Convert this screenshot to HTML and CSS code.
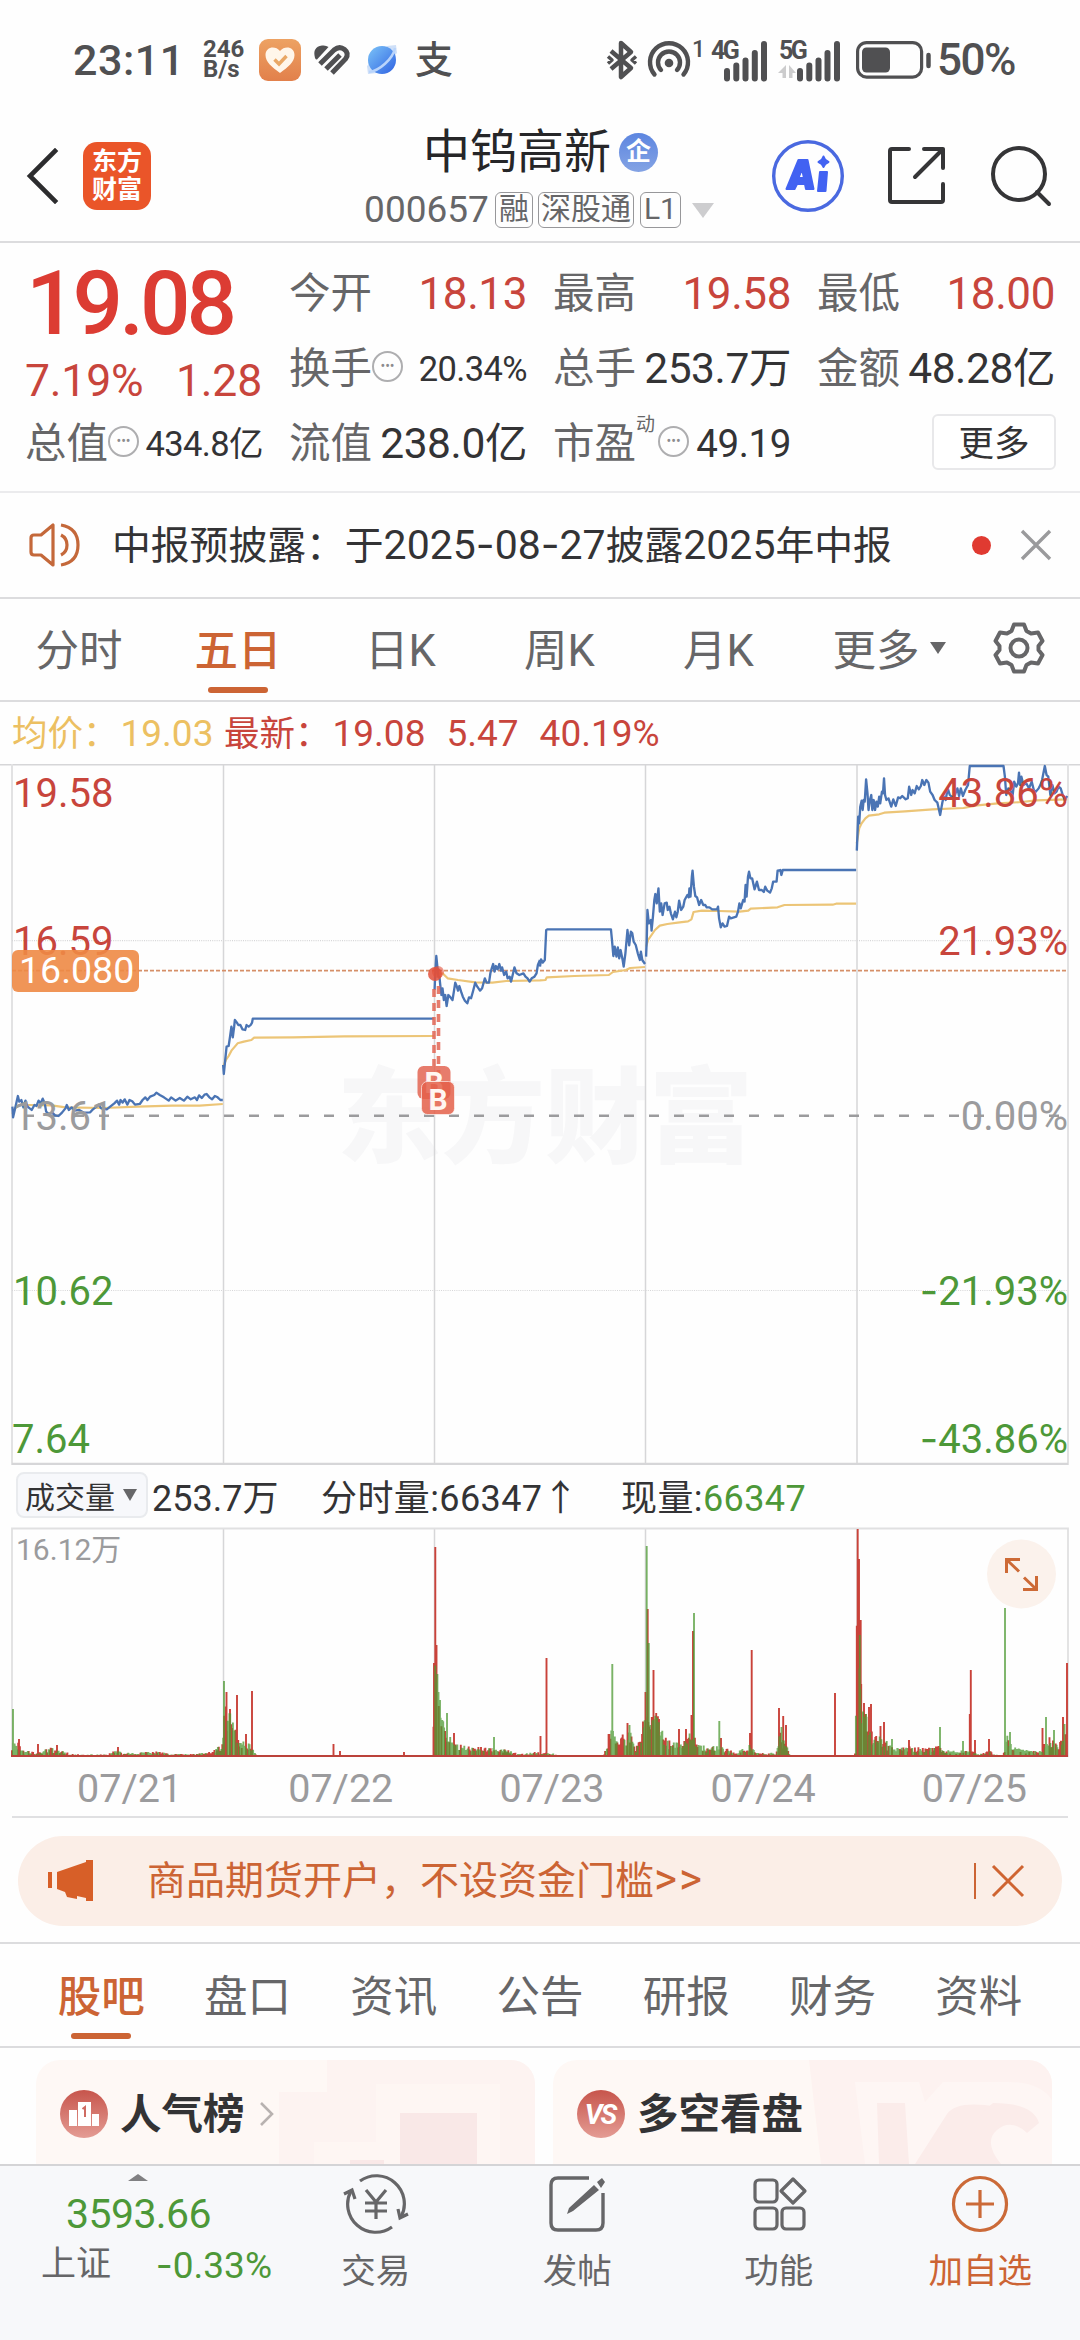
FILE: index.html
```html
<!DOCTYPE html>
<html lang="zh-CN">
<head>
<meta charset="utf-8">
<title>中钨高新 000657</title>
<link rel="stylesheet" href="styles.css">
</head>
<body>
<div class="status">
  <span class="clock">23:11</span>
  <span class="netspeed"><b>246</b><b>B/s</b></span>
  <svg class="st-app" width="42" height="42" viewBox="0 0 42 42"><defs><linearGradient id="og" x2="0" y2="1"><stop offset="0" stop-color="#eda263"/><stop offset="1" stop-color="#e2804b"/></linearGradient></defs><rect width="42" height="42" rx="9" fill="url(#og)"/><path d="M21 34C13 28 6.500 23 6.500 16C6.500 8 16 6 21 12C26 6 35.500 8 35.500 16C35.500 23 29 28 21 34Z" fill="#fff6ea"/><path d="M15.500 20.500l4.500 4.500 7.500-8" fill="none" stroke="#e9a765" stroke-width="3.400"/></svg>
  <svg class="st-heart" width="38" height="32" viewBox="0 0 38 32"><path d="M2 14Q-1 3 9 1.500Q13 1 15.500 3L4 15.500Q3 16 2 14Z" fill="#505052"/><g fill="none" stroke="#505052" stroke-width="5"><path d="M7 20L21 6Q26.500 1.500 31.500 5.500T32.500 15L19 29"/><path d="M13 25L27 11"/></g></svg>
  <svg class="st-planet" width="30" height="30" viewBox="0 0 30 30"><defs><linearGradient id="pg" x1="0" y1="0" x2="1" y2="1"><stop offset="0" stop-color="#7cc4f8"/><stop offset="1" stop-color="#2f62e2"/></linearGradient></defs><path d="M20 1l9-1 1 8-20 20-9 1-1-8z" fill="#cfe0f8"/><circle cx="15" cy="15" r="14" fill="url(#pg)"/><path d="M2 27C12 26 26 14 28 3" fill="none" stroke="#b9d4fb" stroke-width="2.500"/></svg>
  <span class="st-pay">支</span>
  <svg class="st-bt" width="30" height="40" viewBox="0 0 30 40"><g fill="none" stroke="#505052" stroke-width="4.500" stroke-linejoin="round"><path d="M4 11L24 28L14 37V3L24 12L4 29"/><path d="M1 16.500l4 3.500-4 3.500M29 16.500l-4 3.500 4 3.500" stroke-width="3.500"/></g></svg>
  <svg class="st-spot" width="54" height="40" viewBox="0 0 54 40"><g fill="none" stroke="#505052" stroke-width="4.400" stroke-linecap="round"><path d="M7.500 34.500A19 19 0 1 1 36.500 34.500"/><path d="M14 30A11 11 0 1 1 30 30"/></g><circle cx="22" cy="23" r="4.300" fill="#505052"/><text x="45" y="17" class="st-mini">1</text></svg>
  <svg class="st-sig" width="58" height="40" viewBox="0 0 58 40"><text x="0" y="19" class="st-net">4G</text><path d="M16 38.500V31M25.300 38.500V25.500M34.500 38.500V20.500M43.800 38.500V13M53 38.500V4" class="st-bars"/></svg>
  <svg class="st-sig2" width="62" height="40" viewBox="0 0 62 40"><text x="0" y="19" class="st-net">5G</text><path d="M21 38.500V31M30.300 38.500V25.500M39.500 38.500V20.500M48.500 38.500V13M58 38.500V4" class="st-bars"/><path d="M7 25v13H3.500v-5H-1zM10 38V25l7 8h-3.500v5z" fill="#cccccd"/></svg>
  <svg class="st-bat" width="76" height="38" viewBox="0 0 76 38"><rect x="1.600" y="1.600" width="64" height="34.500" rx="9" fill="none" stroke="#505052" stroke-width="3.200"/><rect x="6" y="6.500" width="28" height="25" rx="4.500" fill="#505052"/><path d="M72.500 14v11" stroke="#505052" stroke-width="4.500" stroke-linecap="round"/></svg>
  <span class="percent">50%</span>
</div>

<header class="header">
  <div class="head-left">
    <svg width="34" height="56" viewBox="0 0 34 56"><path d="M30 3L5 28L30 53" fill="none" stroke="#2c2c2e" stroke-width="4.600" stroke-linecap="square"/></svg>
    <div class="brand"><span>东方</span><span>财富</span></div>
  </div>
  <div class="head-mid">
    <div class="name">中钨高新<i class="qi">企</i></div>
    <div class="code">000657<span class="tag t1">融</span><span class="tag t2">深股通</span><span class="tag t3">L1</span><i class="tri"></i></div>
  </div>
  <div class="head-right">
    <svg width="74" height="74" viewBox="0 0 74 74"><circle cx="37" cy="37" r="34.300" fill="none" stroke="#4a69e0" stroke-width="3.400"/><g fill="#4262f2" stroke="#4262f2" stroke-width="2" stroke-linejoin="round"><path fill-rule="evenodd" d="M27.500 21h9l6 29h-7.500l-1-5h-8l-2.500 5H15.500zM31 30l-3.500 9h5.500z"/><path d="M49 33h7l-1.500 19h-7.500zM52.500 17.500q1 4 5 5.500-4 1.500-5 5-1-3.500-5-5 4-1.500 5-5.500z"/></g></svg>
    <svg width="60" height="60" viewBox="0 0 60 60"><g fill="none" stroke="#353537" stroke-width="4" stroke-linecap="round" stroke-linejoin="round"><path d="M22 3H5Q3 3 3 5V54Q3 56 5 56H54Q56 56 56 54V38"/><path d="M37 3H56V22M56 3L28 31"/></g></svg>
    <svg width="62" height="62" viewBox="0 0 62 62"><g fill="none" stroke="#353537" stroke-width="4" stroke-linecap="round"><circle cx="29" cy="29" r="26"/><path d="M47 47L59 59"/></g></svg>
  </div>
</header>

<section class="quote">
  <div class="last"><strong>19.08</strong><p class="num"><span>7.19%</span><span>1.28</span></p></div>
  <div class="cell"><label>今开</label><em class="red">18.13</em></div>
  <div class="cell"><label>最高</label><em class="red">19.58</em></div>
  <div class="cell"><label>最低</label><em class="red">18.00</em></div>
  <div class="cell"><label>换手</label><i class="dots">•••</i><em class="mini">20.34%</em></div>
  <div class="cell"><label>总手</label><em class="wide">253.7万</em></div>
  <div class="cell"><label>金额</label><em class="wide">48.28亿</em></div>
  <div class="cell"><label>总值</label><i class="dots">•••</i><em class="mini">434.8亿</em></div>
  <div class="cell"><label>流值</label><em class="wide">238.0亿</em></div>
  <div class="cell"><label>市盈</label><sup>动</sup><i class="dots">•••</i><em class="mid">49.19</em></div>
  <div class="cell"><button class="more">更多</button></div>
</section>

<section class="notice">
  <svg width="54" height="46" viewBox="0 0 54 46"><g fill="none" stroke="#c4683a" stroke-width="3.200" stroke-linejoin="round"><path d="M24 3V43L12 33H5Q2 33 2 30V16Q2 13 5 13H12Z"/><path d="M32 13Q38 16 38 23T32 33"/><path d="M32 3Q49 6 49 23T32 43"/></g></svg>
  <p>中报预披露：于<b>2025<u>-</u>08<u>-</u>27</b>披露<b>2025</b>年中报</p>
  <i class="reddot"></i>
  <svg width="32" height="32" viewBox="0 0 32 32"><path d="M2 2L30 30M30 2L2 30" stroke="#9a9a9c" stroke-width="3.400"/></svg>
</section>

<nav class="periods">
  <span>分时</span><span class="on">五日</span><span>日K</span><span>周K</span><span>月K</span><span>更多<i></i></span>
  <span><svg width="54" height="54" viewBox="-27 -27 54 54"><g fill="none" stroke="#666668" stroke-width="4" stroke-linejoin="round"><path d="M-5-23.500H5L7.500-17L12-14.500L19-15.500L23.500-7L19.500-2V2L23.500 7L19 15.500L12 14.500L7.500 17L5 23.500H-5L-7.500 17L-12 14.500L-19 15.500L-23.500 7L-19.500 2V-2L-23.500-7L-19-15.500L-12-14.500L-7.500-17Z"/><circle r="8.500"/></g></svg></span>
</nav>

<div class="legend"><span class="yel">均价：<b>19.03</b></span><span class="red">最新：<b>19.08</b><b>5.47</b><b>40.19%</b></span></div>

<svg class="price" width="1080" height="701" viewBox="0 764 1080 701">
  <text x="545" y="1155" class="mark">东方财富</text>
  <g stroke="#d6d6d8" fill="none" stroke-width="1.500">
    <path d="M223.500 765V1465M434.500 765V1465M645.500 765V1465M857 765V1465"/>
    <path d="M0 764.800H1080" stroke-width="1.600"/>
    <path d="M12 764V1465M1068 764V1465" stroke="#e2e2e3" stroke-width="2"/>
    <path d="M12 1464H1068" stroke-width="2.500"/>
    <path d="M12 940.700H1068M12 1290.500H1068" stroke-dasharray="1 1.200" stroke-width="1.200"/>
  </g>
  <path d="M12 1115.800H1068" stroke="#9b9b9d" stroke-width="2.400" stroke-dasharray="10 15" stroke-dashoffset="-12"/>
  <path d="M12 970.700H1066" stroke="#d58f68" stroke-width="1.700" stroke-dasharray="4 2"/>
  <g fill="none" stroke="#ecc577" stroke-width="6.500" stroke-linejoin="round" transform="translate(0 760) scale(.34436 .33333)">
    <polyline points="36,1062 44,1045 56,1035 80,1035 150,1036 190,1042 300,1044 400,1040 500,1037 580,1037 647,1032"/>
    <polyline points="648,920 656,900 664,888 672,872 682,860 690,850 708,845 730,840 738,833 850,832 1000,829 1260,828"/>
    <polyline points="1265,640 1285,640 1300,655 1330,660 1380,667 1430,668 1470,663 1568,661 1584,660 1588,652 1668,648 1768,645 1780,636 1818,630 1830,624 1873,621"/>
    <polyline points="1876,560 1882,540 1890,528 1902,510 1916,497 1938,492 1968,488 1998,484 2008,478 2014,456 2038,452 2088,453 2148,455 2173,452 2180,446 2258,442 2278,435 2418,434 2428,431 2486,431"/>
    <polyline points="2488,250 2495,205 2502,190 2513,175 2523,167 2553,163 2568,158 2628,154 2708,148 2798,144 2838,136 2898,130 2968,126 3008,121 3099,118"/>
  </g>
  <g fill="none" stroke="#4a74b4" stroke-width="6.800" stroke-linejoin="round">
    <g transform="translate(0 760) scale(.34436 .33333)">
      <polyline points="36,1040 38,1072 44,1045 52,1008 56,1025 62,1020 68,1042 74,1022 80,1040 92,1050 100,1035 106,1038 112,1022 118,1030 124,1016 130,1030 134,1055 142,1062 152,1058 160,1066 170,1068 180,1058 190,1045 194,1035 200,1050 208,1042 216,1052 230,1050 244,1058 262,1057 270,1048 280,1040 286,1034 294,1045 310,1048 320,1040 332,1030 340,1022 346,1034 350,1020 356,1028 362,1018 370,1034 376,1020 384,1024 392,1034 406,1032 414,1020 422,1012 428,1020 436,1010 448,1005 454,998 464,1005 476,1012 490,1022 497,1012 510,1022 522,1014 534,1022 544,1010 554,1018 566,1012 572,1020 578,1006 586,1014 594,1004 600,1002 608,1012 616,1018 624,1008 632,1012 640,1020 647,1020"/>
      <polyline points="648,915 650,942 654,900 658,860 664,858 668,830 672,800 676,832 680,800 682,780 688,788 692,795 698,795 704,808 712,810 716,795 722,800 728,795 732,788 734,776 1260,776"/>
      <polyline points="1262,690 1264,640 1267,588 1270,620 1273,650 1276,650 1279,680 1282,705 1285,685 1289,720 1293,705 1297,738 1302,705 1308,712 1314,720 1318,695 1322,668 1326,678 1330,692 1334,678 1339,695 1344,710 1350,722 1357,730 1362,712 1368,715 1374,692 1380,668 1386,680 1394,692 1400,685 1404,670 1408,655 1413,668 1420,668 1424,640 1428,625 1432,612 1436,635 1440,618 1445,628 1450,612 1455,632 1458,622 1464,645 1470,635 1474,655 1480,650 1484,665 1490,640 1494,622 1500,640 1508,645 1520,640 1526,650 1532,655 1538,665 1544,655 1552,650 1558,640 1562,615 1568,600"/>
    </g>
    <g transform="translate(540 760) scale(.34436 .33333)">
      <polyline points="0,620 3,598 8,608 14,600 18,510 22,508 206,508 209,540 213,588 217,560 222,590 226,562 230,595 234,570 240,600 243,620 248,580 254,510 259,556 264,515 268,520 272,545 278,555 284,580 290,600 293,575 297,600 305,612"/>
      <polyline points="308,590 310,540 312,450 316,490 322,480 324,512 328,470 332,420 335,402 339,430 344,385 348,455 352,430 356,465 362,430 368,428 371,450 376,440 380,460 386,478 392,455 396,472 400,455 404,422 410,450 416,440 420,420 428,405 432,412 434,385 437,410 441,350 443,332 447,380 451,408 456,412 462,435 468,420 474,435 480,435 484,442 492,442 500,448 514,448 517,440 520,475 525,502 530,490 536,500 543,498 549,470 554,475 570,470 575,455 579,430 583,445 590,420 594,425 597,375 600,410 604,350 607,335 611,355 616,355 623,388 630,365 636,390 644,390 650,396 654,380 660,392 668,398 673,385 677,365 687,365 690,332 698,330 701,345 705,330 918,330"/>
      <polyline points="920,272 922,220 924,170 927,190 930,140 934,122 937,150 940,120 943,125 947,58 951,100 954,150 958,120 962,105 965,150 969,120 973,150 977,125 981,140 985,110 988,130 993,95 996,100 999,55 1002,105 1006,120 1012,115 1020,140 1026,118 1033,138 1040,112 1046,115 1052,108 1062,118 1068,115 1072,80 1078,105 1082,90 1088,100 1094,78 1100,88 1106,78 1110,60 1116,75 1122,60 1128,68 1133,95 1140,105 1146,120 1154,128 1162,165 1168,130 1172,110 1178,120 1184,85 1190,105 1198,112 1205,105 1212,85 1217,108 1222,85 1228,108 1235,90 1243,75 1248,18 1346,18 1350,50 1354,105 1360,85 1366,90 1372,110 1377,65 1383,80 1388,70 1391,38 1394,75 1398,50 1404,75 1412,70 1420,85 1428,65 1434,90 1440,95 1448,85 1453,75 1458,60 1466,18 1471,45 1476,50 1482,105 1488,75 1494,100 1500,95 1506,80 1512,85 1518,105 1524,120 1531,108"/>
    </g>
  </g>
  <g class="axis">
    <text x="13" y="807" class="up">19.58</text><text x="13" y="955" class="up">16.59</text><text x="13" y="1130" class="flat">13.61</text><text x="13" y="1305" class="down">10.62</text><text x="12" y="1453" class="down">7.64</text>
    <g text-anchor="end"><text x="1068" y="807" class="up">43.86%</text><text x="1068" y="955" class="up">21.93%</text><text x="1068" y="1130" class="flat">0.00%</text><text x="1068" y="1305" class="down"><tspan class="dash">-</tspan>21.93%</text><text x="1068" y="1453" class="down"><tspan class="dash">-</tspan>43.86%</text></g>
  </g>
  <rect x="12" y="950" width="127" height="42" rx="6" fill="#ee8945" fill-opacity=".9"/>
  <text x="19" y="983" class="cost">16.080</text>
  <g fill="none" stroke="#e26553" stroke-opacity=".85" stroke-width="3.600" stroke-dasharray="8 6"><path d="M434 989V1066M438.500 986V1078"/></g>
  <circle cx="435" cy="974" r="7" fill="#e3503b" fill-opacity=".85"/><circle cx="438" cy="972" r="6" fill="#e3503b" fill-opacity=".6"/>
  <rect x="417.500" y="1066" width="33" height="33" rx="6" fill="#e36552" fill-opacity=".85"/><text x="434" y="1093" class="buy">B</text>
  <rect x="421.500" y="1081.500" width="33" height="33" rx="6" fill="#e4604a" fill-opacity=".85" stroke="#fff" stroke-opacity=".6"/><text x="438" y="1110" class="buy">B</text>
</svg>

<div class="volbar"><span class="pick">成交量<i></i></span><span class="v1">253.7万</span><span class="v2">分时量:66347↑</span><span class="v3">现量:<b>66347</b></span></div>

<svg class="volume" width="1080" height="232" viewBox="0 1527 1080 232">
  <path d="M223.500 1528V1757M434.500 1528V1757M645.500 1528V1757M857 1528V1757" stroke="#d6d6d8" stroke-width="1.500"/>
  <path d="M12 1757V1528.500H1068V1757" fill="none" stroke="#e0e0e1" stroke-width="1.800"/>
  <text x="16" y="1560" class="vmax">16.12万</text>
  <g id="bars"></g>
  <path d="M11 1756H1068" stroke="#bb423a" stroke-width="1.800"/>
  <circle cx="1021.500" cy="1574" r="34.500" fill="#fbf2ec"/>
  <path d="M1006.500 1573V1559.500H1020M1007 1560L1019 1571.500M1024 1577.500L1036 1589M1036.500 1576V1589.500H1023" fill="none" stroke="#cd6a36" stroke-width="3"/>
</svg>

<div class="dates"><span>07/21</span><span>07/22</span><span>07/23</span><span>07/24</span><span>07/25</span></div>

<div class="ad">
  <svg width="48" height="42" viewBox="0 0 48 42"><g fill="#d75f28"><path d="M0 12h4v16H0zM9 12L38 2V0h7v41h-7v-3l-9-2v3l-10-2-2-5-8-3z"/></g></svg>
  <p>商品期货开户，不设资金门槛<b>&gt;&gt;</b></p>
  <i class="bar"></i>
  <svg width="34" height="34" viewBox="0 0 34 34"><path d="M2 2L32 32M32 2L2 32" stroke="#cf6431" stroke-width="3"/></svg>
</div>

<nav class="sections"><span class="on">股吧</span><span>盘口</span><span>资讯</span><span>公告</span><span>研报</span><span>财务</span><span>资料</span></nav>

<section class="cards">
  <div class="card">
    <svg class="deco" width="499" height="104" viewBox="0 0 499 104"><path d="M291 0H499V104H243V32H291z" fill="#fdf3f1"/><path d="M278 82h62V24h124V104H278z" fill="#fef6f3"/><path d="M364 53h77v51h-77zM314 100h34v4h-34z" fill="#f9e8e7"/></svg>
    <svg width="48" height="48" viewBox="0 0 48 48"><defs><linearGradient id="rg" x2="0" y2="1"><stop offset="0" stop-color="#c7554c"/><stop offset="1" stop-color="#e49c94"/></linearGradient></defs><circle cx="24" cy="24" r="24" fill="url(#rg)"/><path d="M9 20h8v16H9zM18 12h13v24H18zM32 24h7v12h-7z" fill="#fff"/><path d="M22.500 19l2.500-2v10" fill="none" stroke="#cf6b62" stroke-width="2"/></svg>
    <h3>人气榜</h3>
    <svg width="16" height="26" viewBox="0 0 16 26"><path d="M2 2L13 13L2 24" fill="none" stroke="#b8b2b0" stroke-width="2.600"/></svg>
  </div>
  <div class="card">
    <svg class="deco" width="499" height="104" viewBox="0 0 499 104"><path d="M256 0H499V104H268z" fill="#fdf2f0"/><path d="M302 22h64l6 20 18-20h65q32 0 44 18v64H312z" fill="#fef6f4"/><path d="M324 43h28l4 61h-30zM362 104l32-50q8-12 38-9l20 3q-24 12-22 30l14 26z" fill="#fbecea"/><path d="M440 43q40 0 46 20l-12 10q-16-15-30-3t4 34h-22q-14-40 14-61z" fill="#fbecea"/></svg>
    <svg width="48" height="48" viewBox="0 0 48 48"><circle cx="24" cy="24" r="24" fill="url(#rg)"/><text x="23" y="34" class="vs">VS</text></svg>
    <h3>多空看盘</h3>
  </div>
</section>

<footer class="bottom">
  <div class="index"><i></i><b>3593.66</b><p><span>上证</span><em><u>-</u>0.33%</em></p></div>
  <div class="act"><svg width="68" height="60" viewBox="-34 -30 68 60"><g fill="none" stroke="#666668" stroke-width="3.200"><path d="M-16-23A28 28 0 0 1 25 13M16 23A28 28 0 0 1-25-13"/><path d="M-32-10L-24-14L-21-5M32 10L24 14L22 5"/><path d="M-10-14L0-2L10-14M0-2V15M-11-1H11M-11 7H11"/></g></svg><span>交易</span></div>
  <div class="act"><svg width="60" height="60" viewBox="-30 -30 60 60"><path d="M12-26H-19Q-26-26-26-19V19Q-26 26-19 26H19Q26 26 26 19V-11" fill="none" stroke="#666668" stroke-width="3.400"/><path d="M20-22l5-4 3 4-4 6zM17-19l5 5L-4 7l-6 3 2-6z" fill="#666668"/></svg><span>发帖</span></div>
  <div class="act"><svg width="60" height="60" viewBox="-30 -30 60 60"><g fill="none" stroke="#666668" stroke-width="3.200" stroke-linejoin="round"><rect x="-24" y="-24" width="22" height="22" rx="4"/><rect x="-24" y="4" width="22" height="21" rx="4"/><rect x="3" y="4" width="22" height="21" rx="4"/><path d="M14-25L26-13L14-1L2-13Z"/></g></svg><span>功能</span></div>
  <div class="act hot"><svg width="60" height="60" viewBox="-30 -30 60 60"><g fill="none" stroke="#cb6a38" stroke-width="3.200"><circle r="26.500"/><path d="M-14 0H14M0-14V14"/></g></svg><span>加自选</span></div>
</footer>
<script src="chart.js"></script>
</body>
</html>
```
FILE: styles.css
```css
* { box-sizing: border-box; margin: 0; padding: 0; }
body { width: 1080px; height: 2340px; overflow: hidden; background: #fefefe; color: #333335; font-family: Roboto, "Noto Sans CJK SC", sans-serif; display: flex; flex-direction: column; }
svg { display: block; flex: none; }
i, em { font-style: normal; }
u, .dash { text-decoration: none; font-family: Inter, Roboto, sans-serif; }
.red { color: #c8453c; }
.status, .header, .quote, .notice, .periods, .legend, .volbar, .dates, .sections, .cards, .bottom { flex: none; width: 1080px; white-space: nowrap; }

.status { height: 110px; padding: 10px 0 0 73px; display: flex; align-items: center; color: #505052; }
.status svg { overflow: visible; }
.clock { width: 130px; font-size: 43px; font-weight: 500; letter-spacing: 0.5px; line-height: 50px; }
.netspeed { width: 56px; display: flex; flex-direction: column; font-size: 24px; line-height: 20px; padding-bottom: 2px; }
.st-heart { margin-left: 12px; }
.st-planet { margin-left: 16px; }
.st-pay { margin-left: 18px; width: 40px; font-size: 38px; line-height: 40px; font-weight: 500; }
.st-bt { margin-left: 152px; }
.st-spot { margin-left: 10px; }
.st-sig { margin-left: 10px; }
.st-sig2 { margin-left: 10px; }
.st-bat { margin-left: 15px; }
.st-mini { font-size: 23px; font-weight: 500; fill: #505052; }
.st-net { font-size: 25px; font-weight: 700; fill: #505052; letter-spacing: -2.5px; }
.st-bars { stroke: #505052; stroke-width: 6; stroke-linecap: round; fill: none; }
.percent { margin-left: 5px; font-size: 44px; font-weight: 500; letter-spacing: -1.5px; line-height: 50px; }

.header { height: 133px; display: flex; border-bottom: 2px solid #dcdcde; }
.head-left { width: 364px; padding-left: 25px; display: flex; align-items: center; gap: 24px; }
.brand { width: 68px; height: 68px; border-radius: 14px; background: #ea5529; color: #fff; font-size: 25px; font-weight: 700; line-height: 28px; display: flex; flex-direction: column; align-items: center; justify-content: center; }
.head-mid { width: 350px; display: flex; flex-direction: column; align-items: center; }
.name { display: flex; align-items: center; font-size: 47px; line-height: 62px; height: 70px; color: #262628; gap: 8px; margin-top: 7px; padding-left: 3px; }
.qi { width: 39px; height: 39px; border-radius: 50%; background: linear-gradient(#5d86e0, #84a3e4); color: #fff; font-size: 25px; font-weight: 700; line-height: 38px; text-align: center; }
.code { display: flex; align-items: center; font-size: 37px; line-height: 38px; color: #666668; margin-top: 4px; }
.tag { height: 36px; border: 1.5px solid #97979a; border-radius: 6px; font-size: 30px; line-height: 32px; text-align: center; margin-left: 6px; }
.t1 { width: 38px; }
.t2 { width: 96px; margin-left: 5px; }
.t3 { width: 41px; }
.tri { border: 11px solid transparent; border-top: 15px solid #cdcdcf; border-bottom: 0; margin-left: 11px; }
.head-right { display: flex; align-items: center; margin-left: 57px; }
.head-right svg:nth-child(2) { margin-left: 42px; }
.head-right svg:nth-child(3) { margin-left: 43px; }

.quote { height: 250px; border-bottom: 2px solid #ebebed; padding: 13px 25px 0; display: grid; grid-template-columns: repeat(4, 237px); column-gap: 27px; grid-template-rows: repeat(3, 75px); }
.last { grid-row: span 2; color: #dc3c33; }
.last strong { display: block; font-size: 89px; font-weight: 500; line-height: 96px; letter-spacing: -4px; padding: 0 0 2px 1px; }
.last p { display: flex; justify-content: space-between; font-size: 44.500px; line-height: 50px; color: #c8453c; }
.last span { letter-spacing: -0.2px; }
.last .num { margin-top: 2px; }
.cell { display: flex; align-items: center; font-size: 44px; }
.cell label { font-size: 41.500px; color: #666668; line-height: 60px; }
.cell em { line-height: 60px; letter-spacing: -0.4px; margin-left: auto; margin-right: -1px; }
.cell .wide { font-size: 42.500px; }
.cell .mini { font-size: 34.500px; letter-spacing: -0.6px; }
.cell .mid { font-size: 38.500px; }
.dots { width: 31px; height: 31px; border: 2px solid #aeaeb0; border-radius: 50%; font-size: 14px; line-height: 27px; text-align: center; color: #8c8c8e; margin-top: -4px; }
.cell sup { font-size: 19px; line-height: 24px; align-self: flex-start; color: #666668; margin-top: 7px; }
.cell sup + .dots { margin-left: 3px; }
.more { margin: -4px -2px 0 auto; width: 124px; height: 56px; border: 2px solid #e8e8ea; border-radius: 6px; background: #fff; font: 35.500px/50px "Noto Sans CJK SC", sans-serif; color: #333335; padding-bottom: 4px; }

.notice { height: 106px; border-bottom: 2px solid #dcdcde; display: flex; align-items: center; padding-left: 29px; }
.notice p { width: 858px; padding-left: 29px; font-size: 38.800px; line-height: 60px; }
.notice b { font-size: 41px; font-weight: 400; }
.reddot { width: 19px; height: 19px; border-radius: 50%; background: #e03a31; margin: 0 29px 0 31px; }

.periods { height: 103px; border-bottom: 2px solid #dcdcde; display: grid; grid-template-columns: 158px 160px 165px 153px 165px 176px 84px; }
.periods span, .sections span { display: flex; align-items: center; justify-content: center; font-size: 43.500px; color: #666668; position: relative; }
.periods span { padding-bottom: 4px; }
.periods i { border: 8px solid transparent; border-top: 12px solid #666668; border-bottom: 0; margin-left: 10px; }
.periods .on, .sections .on { color: #cc6434; font-weight: 500; }
.periods .on::after, .sections .on::after { content: ""; position: absolute; bottom: 7px; width: 60px; height: 6px; border-radius: 3px; background: #cc6434; }

.legend { height: 62px; display: flex; align-items: center; padding: 0 0 5px 12px; font-size: 35.500px; }
.legend b { font-weight: 400; font-size: 37px; margin-left: 2px; }
.yel { color: #ecc062; width: 212px; }
.legend b + b { margin-left: 21px; }

.price .mark { font: 900 104px "Noto Sans CJK SC", sans-serif; fill: #f7f7f8; text-anchor: middle; }
.axis { font-size: 40px; }
.up { fill: #c8453c; }
.down { fill: #4d9838; }
.flat { fill: #9b9b9d; }
.cost { font-size: 37.500px; fill: #fff; }
.buy { font-size: 30px; font-weight: 700; fill: #fff6f2; text-anchor: middle; }

.volbar { height: 62px; display: flex; align-items: center; padding: 0 0 3px 16px; font-size: 36px; }
.pick { width: 132px; height: 46px; border: 2px solid #e9ebee; border-radius: 8px; background: #f7f8fb; font-size: 30px; padding-left: 7px; display: flex; align-items: center; gap: 8px; }
.pick i { border: 7px solid transparent; border-top: 12px solid #666668; border-bottom: 0; }
.v1 { margin-left: 4px; width: 169px; }
.v2 { width: 300px; letter-spacing: 0.4px; }
.v3 { letter-spacing: 0.4px; }
.v3 b { font-weight: 400; color: #4d9838; }
.vmax { font-size: 30px; fill: #9b9b9d; }

.dates { width: 1056px; height: 59px; margin: 0 12px; padding-left: 12px; display: grid; grid-template-columns: repeat(5, 211.200px); border-bottom: 2px solid #e0e0e2; color: #9b9b9d; font-size: 39.500px; text-align: center; line-height: 60px; flex: none; }

.ad { flex: none; width: 1044px; height: 90px; margin: 18px 18px 16px; border-radius: 45px; background: #fbeee7; display: flex; align-items: center; padding-left: 30px; color: #cc6434; }
.ad p { width: 826px; padding-left: 51px; font-size: 39px; line-height: 60px; white-space: nowrap; }
.ad b { font-weight: 400; font-size: 44px; letter-spacing: 2px; line-height: 40px; }
.ad .bar { width: 1.500px; height: 36px; background: #cc6434; margin: 0 15px 0 52px; }

.sections { height: 106px; border-top: 2px solid #dcdcde; border-bottom: 2px solid #dcdcde; padding: 0 28px; display: grid; grid-template-columns: repeat(7, 1fr); }
.sections span { padding-bottom: 4px; }
.sections .on::after { bottom: 7px; }

.cards { height: 116px; padding: 12px 36px 0; display: grid; grid-template-columns: 499px 499px; gap: 18px; overflow: hidden; }
.card { height: 130px; border-radius: 24px 24px 0 0; background: #fef8f5; padding: 30px 0 0 24px; display: flex; align-items: flex-start; position: relative; overflow: hidden; }
.deco { position: absolute; left: 0; top: 0; }
.card > svg + svg { position: relative; }
.card h3 { margin: 1px 14px 0 12px; font-size: 41.500px; line-height: 48px; font-weight: 700; position: relative; }
.card h3 + svg { margin-top: 11px; position: relative; }
.vs { font-size: 28px; font-weight: 700; font-style: italic; fill: #fff; text-anchor: middle; letter-spacing: -2px; }

.bottom { height: 176px; background: #f7f8fa; border-top: 2px solid #d4d4d6; display: grid; grid-template-columns: 275px repeat(4, 201.500px); }
.index { display: flex; flex-direction: column; align-items: center; padding-top: 8px; color: #4d9838; }
.index i { border: 10px solid transparent; border-bottom: 7px solid #808082; border-top: 0; }
.index b { font-size: 41px; font-weight: 400; line-height: 50px; margin-top: 8px; letter-spacing: -0.6px; padding-left: 2px; }
.index p { width: 275px; padding: 0 3px 0 41px; display: flex; justify-content: space-between; font-size: 37px; line-height: 48px; margin-top: 2px; }
.index p span { font-size: 35px; color: #666668; }
.act { display: flex; flex-direction: column; align-items: center; padding-top: 8px; color: #666668; font-size: 34.500px; line-height: 50px; }
.act span { margin-top: 12px; }
.act.hot { color: #cc6434; }
```
FILE: chart.js
```js
// Volume bars: an envelope of ordinary minutes plus the individual peaks.
const BASE = 1757;
const RED = '#c9423a';
const GREEN = '#4d9a33';

// [x, height]
const envelope = [
  [12, 15], [20, 14], [24, 7], [40, 5], [50, 9], [62, 7], [70, 3], [108, 2.5], [114, 7], [124, 4], [150, 5], [158, 6], [170, 3], [195, 3], [210, 5], [222, 12],
  [224, 55], [231, 42], [238, 22], [246, 12], [250, 14], [254, 6], [258, 1.5], [433, 1.5],
  [435, 110], [438, 60], [442, 44], [447, 30], [453, 12], [470, 12], [485, 9], [505, 8], [518, 3], [538, 5], [550, 4], [558, 2], [604, 2],
  [610, 28], [620, 20], [630, 26], [636, 10], [641, 20], [645, 50], [649, 62], [653, 48], [658, 40], [664, 20], [674, 14], [683, 14], [690, 25], [694, 20], [706, 10], [715, 12], [726, 9], [735, 4], [750, 12], [756, 4], [776, 4], [780, 24], [788, 8], [791, 1.5], [855, 1.5],
  [857, 150], [862, 60], [868, 40], [874, 24], [886, 16], [893, 10], [905, 10], [925, 10], [938, 12], [950, 6], [970, 8], [978, 3], [990, 6], [997, 2], [1003, 2], [1007, 22], [1015, 10], [1030, 6], [1042, 6], [1046, 20], [1052, 18], [1058, 10], [1067, 30]
];

// [x, height, colour]
const peaks = [
  [13, 48, 'g'], [19, 18, 'r'], [38, 13, 'r'], [57, 12, 'r'], [118, 10, 'r'],
  [224, 76, 'g'], [226.500, 65, 'r'], [230, 48, 'r'], [237, 62, 'r'], [246, 23, 'r'], [252, 66, 'r'], [333.500, 13, 'r'], [340, 6, 'r'], [404, 5, 'r'],
  [434, 94, 'r'], [435.300, 210, 'r'], [436.500, 112, 'r'], [437.400, 83, 'g'], [438.500, 65, 'g'], [440, 57, 'g'], [447, 44, 'g'], [454, 24, 'r'], [494, 20, 'g'],
  [540.500, 21, 'r'], [546.500, 99, 'r'], [612.300, 93, 'g'], [627.500, 34, 'r'], [629.500, 32, 'g'],
  [645.500, 65, 'r'], [646.700, 211, 'g'], [647.700, 148, 'r'], [648.800, 114, 'g'], [653.500, 87, 'r'], [659, 38, 'r'], [679, 28, 'r'], [686, 28, 'r'], [691.500, 42, 'r'], [693, 126, 'r'], [694, 144, 'g'],
  [719.300, 36, 'g'], [721, 19, 'r'], [750, 24, 'r'], [751.700, 107, 'r'], [779, 49, 'r'], [781.500, 30, 'g'], [783.200, 41, 'r'], [786, 32, 'r'], [835, 64, 'r'],
  [857, 84, 'r'], [857.700, 228, 'r'], [859, 198, 'r'], [859.800, 122, 'g'], [860.700, 137, 'r'], [864, 54, 'r'], [866, 43, 'g'], [869, 50, 'r'], [871, 53, 'r'], [880.500, 31, 'r'], [884, 35, 'r'], [892, 18, 'g'], [909, 17, 'r'],
  [940, 30, 'g'], [963, 16, 'g'], [969.800, 43, 'r'], [970.800, 87, 'r'], [975, 17, 'r'], [989, 18, 'r'], [1005, 149, 'g'], [1010, 25, 'g'], [1042.500, 29, 'r'], [1046, 40, 'g'], [1054, 27, 'g'], [1063, 40, 'r'], [1064.500, 33, 'g'], [1067, 94, 'r']
];

function level(x) {
  for (let k = 1; k < envelope.length; k++) {
    const a = envelope[k - 1], b = envelope[k];
    if (x <= b[0]) return a[1] + (b[1] - a[1]) * (x - a[0]) / (b[0] - a[0]);
  }
  return 2;
}

let seed = 17;
function random() {
  seed = (seed * 16807) % 2147483647;
  return seed / 2147483647;
}

let red = '', green = '';
function add(x, h, up) {
  const d = `M${x.toFixed(1)} ${BASE}v${(-h).toFixed(1)}`;
  if (up) red += d; else green += d;
}
for (let x = 12; x < 1067; x += 0.88) {
  const top = level(x);
  add(x, Math.max(1.3, top * (0.45 + 0.6 * random())), top < 1.8 || random() < 0.5);
}
peaks.forEach(p => add(p[0], p[1], p[2] === 'r'));
document.getElementById('bars').innerHTML =
  `<path d="${red}" stroke="${RED}" stroke-width="1.9"/>` +
  `<path d="${green}" stroke="${GREEN}" stroke-width="1.9" stroke-opacity=".75"/>`;
```
